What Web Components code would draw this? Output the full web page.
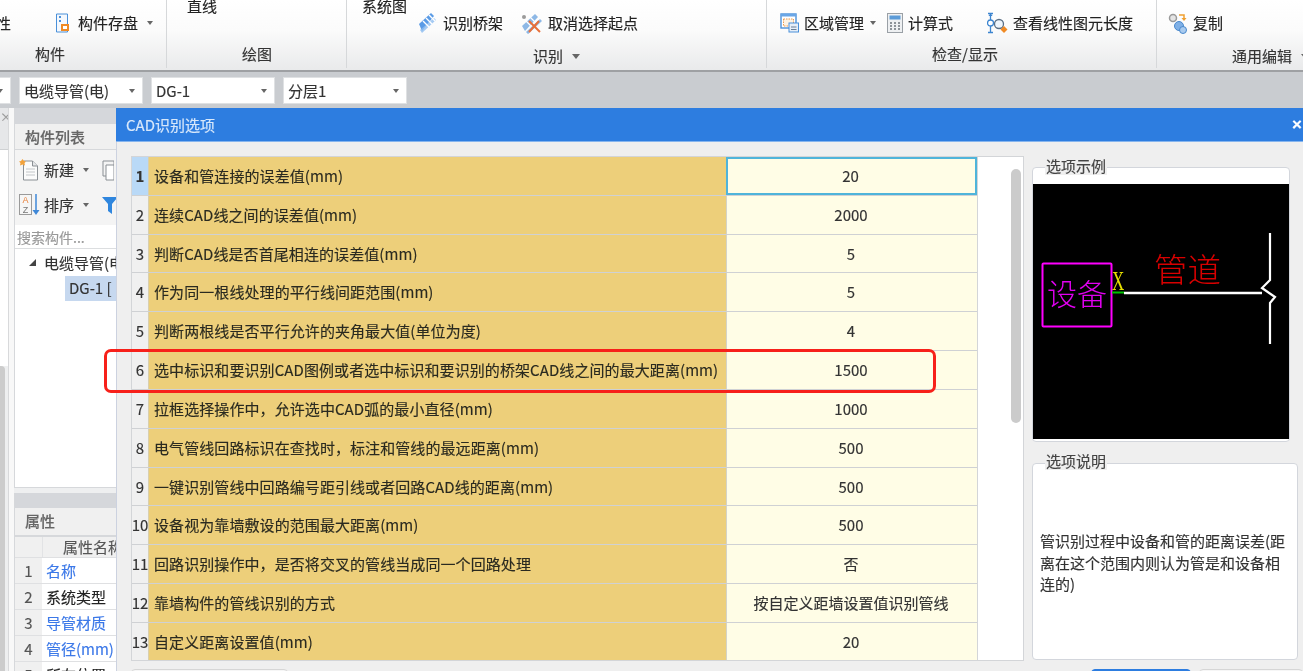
<!DOCTYPE html>
<html lang="zh-CN">
<head>
<meta charset="utf-8">
<title>CAD识别选项</title>
<style>
  html, body { margin: 0; height: 100%; overflow: hidden; }
  body { font: 15px/20px "Noto Sans CJK SC", "Liberation Sans", sans-serif; color: #222; background: #c9ccd0; -webkit-text-stroke: .15px; }
</style>
</head>
<body>

<app-shell>
  <ribbon-bar>
    <ribbon-group width="167" label="构件" label-x="35">
      <div style="display:flex;margin:13px 0 0 -4px;align-items:center">
        <span style="width:59px;overflow:hidden">性</span>
        <ribbon-item text="构件存盘" arrow="1" icon="save"></ribbon-item>
      </div>
    </ribbon-group>
    <ribbon-group width="180" label="绘图" label-x="75">
      <div style="margin:-4px 0 0 20px">直线</div>
    </ribbon-group>
    <ribbon-group width="420" label="识别" label-x="186" label-y="2" label-arrow="1">
      <div style="margin:-4px 0 0 15px">系统图</div>
      <div style="display:flex;gap:18px;margin:-3px 0 0 69px">
        <ribbon-item text="识别桥架" icon="tray"></ribbon-item>
        <ribbon-item text="取消选择起点" icon="cancel"></ribbon-item>
      </div>
    </ribbon-group>
    <ribbon-group width="390" label="检查/显示" label-x="165">
      <div style="display:flex;margin:13px 0 0 13px">
        <ribbon-item text="区域管理" arrow="1" tight="1" icon="area"></ribbon-item>
        <ribbon-item text="计算式" icon="calc" style="margin-left:11px"></ribbon-item>
        <ribbon-item text="查看线性图元长度" icon="length" style="margin-left:34px"></ribbon-item>
      </div>
    </ribbon-group>
    <ribbon-group width="146" label="通用编辑" label-x="75" label-y="2" label-arrow="1" last="1">
      <div style="display:flex;margin:13px 0 0 11px">
        <ribbon-item text="复制" icon="copy"></ribbon-item>
      </div>
    </ribbon-group>
  </ribbon-bar>

  <combo-row>
    <combo-box></combo-box>
    <combo-box>电缆导管(电)</combo-box>
    <combo-box>DG-1</combo-box>
    <combo-box>分层1</combo-box>
  </combo-row>

  <work-area>
    <left-dock></left-dock>
    <cad-dialog heading="CAD识别选项">
      <option-table>
        <option-row n="1" label="设备和管连接的误差值(mm)" value="20" active="1"></option-row>
        <option-row n="2" label="连续CAD线之间的误差值(mm)" value="2000"></option-row>
        <option-row n="3" label="判断CAD线是否首尾相连的误差值(mm)" value="5"></option-row>
        <option-row n="4" label="作为同一根线处理的平行线间距范围(mm)" value="5"></option-row>
        <option-row n="5" label="判断两根线是否平行允许的夹角最大值(单位为度)" value="4"></option-row>
        <option-row n="6" label="选中标识和要识别CAD图例或者选中标识和要识别的桥架CAD线之间的最大距离(mm)" value="1500"></option-row>
        <option-row n="7" label="拉框选择操作中，允许选中CAD弧的最小直径(mm)" value="1000"></option-row>
        <option-row n="8" label="电气管线回路标识在查找时，标注和管线的最远距离(mm)" value="500"></option-row>
        <option-row n="9" label="一键识别管线中回路编号距引线或者回路CAD线的距离(mm)" value="500"></option-row>
        <option-row n="10" label="设备视为靠墙敷设的范围最大距离(mm)" value="500"></option-row>
        <option-row n="11" label="回路识别操作中，是否将交叉的管线当成同一个回路处理" value="否"></option-row>
        <option-row n="12" label="靠墙构件的管线识别的方式" value="按自定义距墙设置值识别管线"></option-row>
        <option-row n="13" label="自定义距离设置值(mm)" value="20"></option-row>
      </option-table>
      <div slot="side" style="display:flex;flex-direction:column;gap:21px;padding-top:11px">
        <group-box legend="选项示例" style="width:258px;height:275px;--legend-top:-11px"><sample-drawing></sample-drawing></group-box>
        <group-box legend="选项说明" style="width:266px;height:197px;--legend-top:-12px">
          <div style="padding:66px 10px 0 7px;line-height:21.5px;color:#333">管识别过程中设备和管的距离误差(距离在这个范围内则认为管是和设备相连的)</div>
        </group-box>
      </div>
    </cad-dialog>
  </work-area>
  <red-mark></red-mark>
</app-shell>

<script>
// small svg icons for the ribbon and the left panel
const ICONS = {
  save: `<svg width="18" height="20" viewBox="0 0 18 20"><path d="M1.5 1h11v18h-11z" fill="#f4f8fd" stroke="#4a90d9"/><path d="M4 3h2v2H4zM4 7h2v2H4z" fill="#4a90d9"/><rect x="6" y="11" width="8" height="7" fill="#f08a24"/><rect x="8" y="13" width="4" height="3" fill="#fff"/></svg>`,
  tray: `<svg width="22" height="22" viewBox="0 0 22 22"><path d="M3 12 15 1l3 3L6 19z" fill="#5a9be6"/><path d="M6 21 20 8l-2-2L4 18z" fill="#8dbdf0" opacity=".8"/><path d="M7 9l6 6M10 6l6 6M13 3l6 6" stroke="#fff" stroke-width="1.4"/></svg>`,
  cancel: `<svg width="22" height="22" viewBox="0 0 22 22"><path d="M1 14 14 2l3 3L4 19z" fill="#8db8e6"/><path d="M6 21 20 8" stroke="#8db8e6" stroke-width="3"/><path d="M4 8l6 6M8 4l6 6" stroke="#fff" stroke-width="1.2"/><circle cx="3" cy="5" r="2" fill="#9a9a9a"/><path d="M8 9l11 11M18 9 8 20" stroke="#e8703a" stroke-width="2"/></svg>`,
  area: `<svg width="19" height="20" viewBox="0 0 19 20"><rect x="1" y="1" width="15" height="14" fill="#fff" stroke="#4a90d9" stroke-width="1.4"/><rect x="1" y="1" width="15" height="2.5" fill="#6aa6e6"/><rect x="3.5" y="6" width="10" height="7" fill="#fdf3e4" stroke="#ee9a4d" stroke-dasharray="1.5 1"/><rect x="9" y="10" width="9.5" height="9" fill="#e6eef8" stroke="#4a90d9"/><path d="M11 14h5.5M11 16.500h5.500" stroke="#6a7f96"/></svg>`,
  calc: `<svg width="16" height="20" viewBox="0 0 16 20"><rect x=".5" y=".5" width="15" height="19" fill="#eef0f2" stroke="#9aa0a6"/><rect x="2.500" y="2.500" width="11" height="4" fill="#5b9bd8"/><path d="M3 9h2v2H3zM7 9h2v2H7zM11 9h2v2h-2zM3 12h2v2H3zM7 12h2v2H7zM11 12h2v2h-2zM3 15h2v2H3zM7 15h2v2H7zM11 15h2v2h-2z" fill="#8d9399"/></svg>`,
  length: `<svg width="21" height="22" viewBox="0 0 21 22"><path d="M3.500 3v17M1 1.500h5M1 20.500h5" stroke="#3c85d0" stroke-width="1.300" fill="none"/><path d="M1.500 4l2-3 2 3z" fill="#3c85d0"/><circle cx="3.500" cy="11" r="3" fill="#fff" stroke="#3c85d0" stroke-width="1.300"/><circle cx="12" cy="12" r="4.500" fill="#eef5fc" stroke="#5a6f85" stroke-width="1.300"/><path d="M15 16l2 2" stroke="#5a6f85" stroke-width="1.500"/><path d="M17 14l3.500 3.500L17 21l-3.500-3.500z" fill="#f08a24"/></svg>`,
  copy: `<svg width="20" height="22" viewBox="0 0 20 22"><circle cx="5" cy="6" r="3.500" fill="#e4e4e4" stroke="#9a9a9a" stroke-width="1.500"/><path d="M11 3h5v4" fill="none" stroke="#f0a030" stroke-width="1.500"/><path d="M13.500 6h5L16 9z" fill="#f0a030"/><circle cx="11" cy="14" r="4.500" fill="#7fb0e6" stroke="#4a88cc"/><circle cx="15" cy="18" r="3.500" fill="#a9cbef" stroke="#4a88cc"/></svg>`,
  newdoc: `<svg width="20" height="22" viewBox="0 0 20 22"><path d="M4.500 2h9l5 5v14h-14z" fill="#fbfbfb" stroke="#8a8f94"/><path d="M13.500 2v5h5" fill="#e4e6e8" stroke="#8a8f94"/><path d="M7 10h9M7 13h9M7 16h9" stroke="#c3c6c9"/><path d="M3.500 0 5 2l2 .5-1.500 1.500L6 6.500 3.500 5.500 1 6.500 1.500 4 0 2.500 2 2z" fill="#f2a23c"/></svg>`,
  dup: `<svg width="12" height="22" viewBox="0 0 12 22"><path d="M1 2h11v15H1z" fill="#f4f4f4" stroke="#8a8f94"/><path d="M4 6h8v15H4z" fill="#fff" stroke="#8a8f94"/></svg>`,
  sort: `<svg width="22" height="24" viewBox="0 0 22 24"><rect x=".5" y="1.500" width="12" height="20" fill="#f6f6f6" stroke="#9a9a9a"/><text x="6.500" y="10" font-size="9" font-family="Liberation Sans" fill="#e8803a" stroke="none" text-anchor="middle">A</text><text x="6.500" y="19.500" font-size="9" font-family="Liberation Sans" fill="#777" stroke="none" text-anchor="middle">Z</text><path d="M17 1v18" stroke="#3f88d8" stroke-width="1.500"/><path d="M13.500 17h7L17 22z" fill="#3f88d8"/></svg>`,
  funnel: `<svg width="14" height="18" viewBox="0 0 14 18"><path d="M0 1h16l-6 7v10l-4-3V8z" fill="#2f86de"/></svg>`
};

class AppShell extends HTMLElement {
  constructor() {
    super();
    this.attachShadow({ mode: "open" });
  }
  connectedCallback() {
    this.shadowRoot.innerHTML = `
      <style>
        :host { display: flex; flex-direction: column; height: 671px; width: 1303px; overflow: hidden; position: relative; filter: blur(.35px); }
      </style>
      <slot></slot>`;
  }
}

class RibbonBar extends HTMLElement {
  constructor() {
    super();
    this.attachShadow({ mode: "open" });
  }
  connectedCallback() {
    this.shadowRoot.innerHTML = `
      <style>
        :host { display: flex; height: 72px; flex: none; overflow: hidden; box-sizing: border-box;
          background: linear-gradient(#ffffff 0, #fbfbfb 30px, #e9eaeb 70px); border-bottom: 2px solid #9ea0a3; }
      </style>
      <slot></slot>`;
  }
}

class RibbonGroup extends HTMLElement {
  constructor() {
    super();
    this.attachShadow({ mode: "open" });
  }
  connectedCallback() {
    const width = this.getAttribute("width");
    const label = this.getAttribute("label");
    const label_x = this.getAttribute("label-x") || 0;
    const label_y = this.getAttribute("label-y") || 0;
    const last = this.getAttribute("last");
    const arrow = this.getAttribute("label-arrow") ? `<i></i>` : "";
    this.shadowRoot.innerHTML = `
      <style>
        :host { display: block; width: ${width}px; flex: none; height: 68px; box-sizing: border-box; position: relative;
          border-right: ${last ? 0 : "1px solid #d6d8da"}; }
        .top { height: 44px; display: flow-root; }
        .label { padding: ${label_y}px 0 0 ${label_x}px; display: flex; align-items: center; white-space: nowrap; color: #333; }
        i { width: 0; height: 0; border: 4.5px solid transparent; border-top: 5px solid #666; border-bottom: 0; margin-left: 9px; }
      </style>
      <div class="top"><slot></slot></div>
      <div class="label">${label}${arrow}</div>`;
  }
}

class RibbonItem extends HTMLElement {
  constructor() {
    super();
    this.attachShadow({ mode: "open" });
  }
  connectedCallback() {
    const text = this.getAttribute("text");
    const icon = ICONS[this.getAttribute("icon")] || "";
    const tight = this.getAttribute("tight");
    const arrow = this.getAttribute("arrow") ? `<i></i>` : "";
    this.shadowRoot.innerHTML = `
      <style>
        :host { display: inline-flex; align-items: center; gap: 5px; height: 20px; white-space: nowrap; color: #222; }
        svg { flex: none; display: block; }
        i { width: 0; height: 0; border: 3.5px solid transparent; border-top: 4px solid #666; border-bottom: 0; margin-left: ${tight ? 1 : 4}px; }
      </style>
      ${icon}<span>${text}</span>${arrow}`;
  }
}

class ComboRow extends HTMLElement {
  constructor() {
    super();
    this.attachShadow({ mode: "open" });
  }
  connectedCallback() {
    this.shadowRoot.innerHTML = `
      <style>
        :host { display: flex; flex: none; gap: 8px; height: 36px; box-sizing: border-box; padding-top: 5px; margin-left: -113px; background: #c9ccd0; }
      </style>
      <slot></slot>`;
  }
}

class ComboBox extends HTMLElement {
  constructor() {
    super();
    this.attachShadow({ mode: "open" });
  }
  connectedCallback() {
    this.shadowRoot.innerHTML = `
      <style>
        :host { display: flex; align-items: center; justify-content: space-between; box-sizing: border-box; width: 124px; height: 27px;
          background: #fff; border: 1px solid #dfe1e3; padding: 0 7px 0 4px; color: #333; white-space: nowrap; }
        i { width: 0; height: 0; border: 3.5px solid transparent; border-top: 4px solid #666; border-bottom: 0; }
      </style>
      <span><slot></slot></span><i></i>`;
  }
}

class WorkArea extends HTMLElement {
  constructor() {
    super();
    this.attachShadow({ mode: "open" });
  }
  connectedCallback() {
    this.shadowRoot.innerHTML = `
      <style>
        :host { display: block; flex: 1; position: relative; overflow: hidden; background: #eeeff0; }
      </style>
      <slot></slot>`;
  }
}

class LeftDock extends HTMLElement {
  constructor() {
    super();
    this.attachShadow({ mode: "open" });
  }
  connectedCallback() {
    const rows = [["1", "名称", 1], ["2", "系统类型", 0], ["3", "导管材质", 1], ["4", "管径(mm)", 1], ["5", "所在位置", 0]];
    const prop_rows = rows.map(r => `
      <div class="prop"><b>${r[0]}</b><span class="${r[2] ? "blue" : ""}">${r[1]}</span></div>`).join("");
    this.shadowRoot.innerHTML = `
      <style>
        :host { display: flex; width: 116px; height: 563px; overflow: hidden; }
        .strip { width: 8px; flex: none; display: flex; flex-direction: column; background: #eeeff0; }
        .strip .h { height: 42px; background: #e6e7e9; color: #999; font-size: 12px; line-height: 18px; box-sizing: border-box; border-bottom: 1px solid #cfd1d3; }
        .strip .w { height: 216px; background: #fff; }
        .strip .g { flex: 1; width: 5px; background: #cccccc; border-radius: 0 4px 0 0; }
        .gap { width: 6px; flex: none; box-sizing: border-box; border-left: 1px solid #d8d9db; background: #f8f8f8; }
        .panels { width: 102px; flex: none; white-space: nowrap; }
        .p1 { height: 380px; background: #fff; border: solid #d6d8db; border-width: 0 0 1px 1px; box-sizing: border-box; overflow: hidden; }
        .bar { height: 16px; background: #d5d7db; }
        .tab { height: 26px; background: #f0f0f0; color: #666; padding: 3px 0 0 10px; box-sizing: border-box; font-weight: 500; border-bottom: 1px solid #d6d8db; }
        .tools { height: 75px; background: #f4f4f4; position: relative; }
        .tool { display: flex; align-items: center; gap: 4px; height: 24px; padding-left: 4px; color: #333; }
        .tool i { width: 0; height: 0; border: 3.5px solid transparent; border-top: 4px solid #666; border-bottom: 0; margin-left: 5px; }
        .tool svg { flex: none; display: block; }
        .search { height: 24px; color: #999; padding: 2px 0 0 2px; box-sizing: border-box; background: #fff; border-bottom: 1px solid #dcdee0; font-size: 14px; }
        .node { padding: 4px 0 0 29px; height: 27px; box-sizing: border-box; position: relative; color: #333; }
        .node::before { content: ""; position: absolute; left: 14px; top: 10px; border: solid transparent; border-width: 0 0 7px 7px; border-bottom-color: #444; }
        .leaf { margin: 0 0 0 50px; height: 25px; background: #c6d8ef; padding: 2px 0 0 4px; box-sizing: border-box; color: #333; }
        .p2 { margin-top: 5px; border-left: 1px solid #d6d8db; background: #fff; height: 200px; overflow: hidden; }
        .p2 .tab { height: 29px; padding-top: 3px; border-bottom: 2px solid #d6d8db; }
        .head { display: flex; height: 20px; background: #f0f0f0; color: #555; border-bottom: 1px solid #dfe0e2; line-height: 19px; }
        .head u { width: 27px; flex: none; border-right: 1px solid #e2e3e5; }
        .head span { padding-left: 20px; }
        .prop { display: flex; height: 26px; box-sizing: border-box; border-bottom: 1px solid #dfe0e2; align-items: center; }
        .prop b { width: 27px; flex: none; font-weight: 400; text-align: center; background: #f0f0f0; color: #555; height: 100%; line-height: 25px; }
        .prop span { padding-left: 4px; color: #222; }
        .prop span.blue { color: #3b78e8; }
      </style>
      <div class="strip"><div class="h">×</div><div class="w"></div><div class="g"></div></div>
      <div class="gap"></div>
      <div class="panels">
        <div class="p1">
          <div class="bar"></div>
          <div class="tab">构件列表</div>
          <div class="tools">
            <div class="tool" style="padding-top:8px">${ICONS.newdoc}<span style="margin-left:1px">新建</span><i></i><span style="margin-left:9px;display:flex">${ICONS.dup}</span></div>
            <div class="tool" style="padding-top:11px">${ICONS.sort}<span style="margin-left:-1px">排序</span><i></i><span style="margin-left:9px;display:flex">${ICONS.funnel}</span></div>
          </div>
          <div class="search">搜索构件...</div>
          <div class="node">电缆导管(电)</div>
          <div class="leaf">DG-1 [</div>
        </div>
        <div class="p2">
          <div class="bar" style="height:15px"></div>
          <div class="tab">属性</div>
          <div class="head"><u></u><span>属性名称</span></div>
          ${prop_rows}
        </div>
      </div>`;
  }
}

class CadDialog extends HTMLElement {
  constructor() {
    super();
    this.attachShadow({ mode: "open" });
  }
  connectedCallback() {
    const heading = this.getAttribute("heading");
    this.shadowRoot.innerHTML = `
      <style>
        :host { display: flex; flex-direction: column; position: absolute; left: 116px; top: 0; right: 0; bottom: 0; background: #efefef; border-left: 1px solid #ccd2e0; box-sizing: border-box; }
        .title { height: 33px; flex: none; margin-left: -1px; background: #2d7de0; border-bottom: 1px solid #86b5ee; color: #d8e8fb; display: flex; align-items: center; justify-content: space-between; padding: 0 1px 0 10px; }
        .title span { color: #fff; font-size: 17px; font-weight: 700; font-family: "Liberation Sans", sans-serif; }
        .main { display: flex; gap: 8px; height: 505px; flex: none; padding: 14px 0 0 14px; }
        .foot { display: flex; gap: 8px; padding: 8px 0 0 14px; }
        .foot div { height: 30px; box-sizing: border-box; border: 1px solid #d6d6d6; border-radius: 4px; background: #f6f6f6; }
        .foot .a { width: 157px; }
        .foot .b { width: 100px; margin-left: auto; background: #2d7de0; border-color: #2d7de0; }
        .foot .c { width: 104px; }
      </style>
      <div class="title">${heading}<span>×</span></div>
      <div class="main"><slot></slot><slot name="side"></slot></div>
      <div class="foot"><div class="a"></div><div class="b"></div><div class="c"></div></div>`;
  }
}

class OptionTable extends HTMLElement {
  constructor() {
    super();
    this.attachShadow({ mode: "open" });
  }
  connectedCallback() {
    this.shadowRoot.innerHTML = `
      <style>
        :host { display: flex; width: 893px; height: 505px; flex: none; box-sizing: border-box; background: #fff; border: 1px solid #d3d5d8; overflow: hidden; }
        .rows { width: 845px; flex: none; border-right: 1px solid #d3d5d8; box-sizing: content-box; }
        .track { padding: 12px 0 0 33px; }
        .thumb { width: 10px; height: 254px; background: #cbcbcb; border-radius: 5px; }
      </style>
      <div class="rows"><slot></slot></div>
      <div class="track"><div class="thumb"></div></div>`;
  }
}

class OptionRow extends HTMLElement {
  constructor() {
    super();
    this.attachShadow({ mode: "open" });
  }
  connectedCallback() {
    const n = this.getAttribute("n");
    const label = this.getAttribute("label");
    const value = this.getAttribute("value");
    const active = this.getAttribute("active");
    this.shadowRoot.innerHTML = `
      <style>
        :host { display: grid; grid-template-columns: 16px 578px 251px; height: 38.84px; box-sizing: border-box; border-bottom: 1px solid #cfd1d4; }
        div { display: flex; align-items: center; white-space: nowrap; min-width: 0; }
        .n { justify-content: center; background: ${active ? "#b9d9f7" : "#f0f0f0"}; font-weight: ${active ? 700 : 400}; color: #333; }
        .l { background: #edcf7a; padding-left: 5px; border-left: 1px solid #d9cfae; color: #2a2a20; letter-spacing: .08px; }
        .v { justify-content: center; background: #fffde6; border-left: 1px solid #d3d3c8; color: #333; box-sizing: border-box; padding-right: 2px; ${active ? "border: 2px solid #4fb4da;" : ""} }
      </style>
      <div class="n">${n}</div><div class="l">${label}</div><div class="v">${value}</div>`;
  }
}

class GroupBox extends HTMLElement {
  constructor() {
    super();
    this.attachShadow({ mode: "open" });
  }
  connectedCallback() {
    const legend = this.getAttribute("legend");
    this.shadowRoot.innerHTML = `
      <style>
        :host { display: block; position: relative; box-sizing: border-box; flex: none; background: #fff; border: 1px solid #d3d6dc; border-radius: 4px; }
        .legend { position: absolute; left: 12px; top: var(--legend-top); padding: 0 1px; background: #efefef; color: #444; line-height: 18px; }
      </style>
      <span class="legend">${legend}</span>
      <slot></slot>`;
  }
}

class SampleDrawing extends HTMLElement {
  constructor() {
    super();
    this.attachShadow({ mode: "open" });
  }
  connectedCallback() {
    this.shadowRoot.innerHTML = `
      <style>
        :host { display: block; margin-top: 16px; height: 255px; background: #000; -webkit-text-stroke: 0; }
        svg { display: block; }
        text { font-family: "Noto Sans CJK SC", sans-serif; }
      </style>
      <svg width="257" height="255" viewBox="0 0 257 255">
        <rect x="9.500" y="79.500" width="69" height="63" rx="1" fill="none" stroke="#ff00ff" stroke-width="2"/>
        <text x="14" y="121" font-size="30" font-weight="300" fill="#e000f0">设备</text>
        <text x="121" y="98" font-size="33.500" font-weight="300" fill="#d80000">管道</text>
        <text transform="translate(79 106) scale(.63 1)" font-size="27" fill="#e8e000" style="font-family:'Liberation Serif',serif">X</text>
        <path d="M79 108.500h12" stroke="#00c000" stroke-width="2"/>
        <path d="M91 109h138" stroke="#fff" stroke-width="2.500"/>
        <path d="M237 49v47l-8 8 13 9-5 6v41" fill="none" stroke="#fff" stroke-width="2.200"/>
      </svg>`;
  }
}

class RedMark extends HTMLElement {
  constructor() {
    super();
    this.attachShadow({ mode: "open" });
  }
  connectedCallback() {
    this.shadowRoot.innerHTML = `
      <style>
        :host { display: block; position: absolute; left: 104px; top: 349px; width: 832px; height: 44px; box-sizing: border-box; border: 3px solid #f7201a; border-radius: 7px; pointer-events: none; }
      </style>`;
  }
}

window.customElements.define("app-shell", AppShell);
window.customElements.define("ribbon-bar", RibbonBar);
window.customElements.define("ribbon-group", RibbonGroup);
window.customElements.define("ribbon-item", RibbonItem);
window.customElements.define("combo-row", ComboRow);
window.customElements.define("combo-box", ComboBox);
window.customElements.define("work-area", WorkArea);
window.customElements.define("left-dock", LeftDock);
window.customElements.define("cad-dialog", CadDialog);
window.customElements.define("option-table", OptionTable);
window.customElements.define("option-row", OptionRow);
window.customElements.define("group-box", GroupBox);
window.customElements.define("sample-drawing", SampleDrawing);
window.customElements.define("red-mark", RedMark);
</script>
</body>
</html>
